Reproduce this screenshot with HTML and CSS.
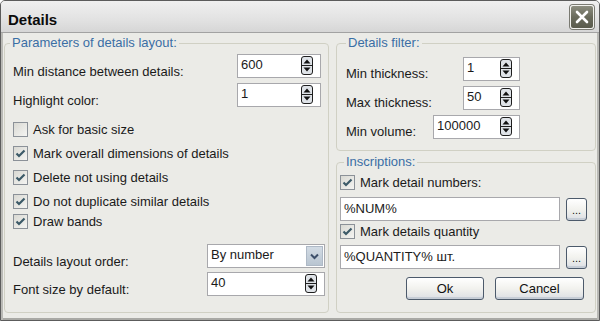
FILE: index.html
```html
<!DOCTYPE html>
<html lang="en">
<head>
  <meta charset="UTF-8">
  <title>Details</title>
  <link rel="stylesheet" href="styles.css">
</head>
<body>
  <div class="window">
    <div class="titlebar">
      <span class="title">Details</span>
      <div class="close">
        <svg width="22" height="22" viewBox="0 0 22 22"><path d="M6 6 L16 16 M16 6 L6 16" stroke="#fff" stroke-width="2.6" stroke-linecap="round"/></svg>
      </div>
    </div>

    <div class="content">
      <fieldset class="group params">
        <legend>Parameters of details layout:</legend>

        <div class="row">
          <label>Min distance between details:</label>
          <div class="spin-field top">
            <span>600</span>
            <svg class="spin" width="12" height="19" viewBox="0 0 12 19"><rect x="0.5" y="0.5" width="11" height="18" rx="2.5" fill="#dfe3e8" stroke="#1e1e1e"/><path d="M1 9.5 H11" stroke="#1e1e1e"/><path d="M2.5 7.5 L6 3.5 L9.5 7.5 Z M2.5 11.5 L9.5 11.5 L6 15.5 Z" fill="#111"/></svg>
          </div>
        </div>
        <div class="row second">
          <label>Highlight color:</label>
          <div class="spin-field top">
            <span>1</span>
            <svg class="spin" width="12" height="19" viewBox="0 0 12 19"><rect x="0.5" y="0.5" width="11" height="18" rx="2.5" fill="#dfe3e8" stroke="#1e1e1e"/><path d="M1 9.5 H11" stroke="#1e1e1e"/><path d="M2.5 7.5 L6 3.5 L9.5 7.5 Z M2.5 11.5 L9.5 11.5 L6 15.5 Z" fill="#111"/></svg>
          </div>
        </div>

        <div class="checks">
          <div class="check"><span class="box"></span>Ask for basic size</div>
          <div class="check"><span class="box"><svg width="13" height="13" viewBox="0 0 13 13"><path d="M2.5 6.5 L5 9 L10.5 3.5" fill="none" stroke="#3c5a68" stroke-width="2.2"/></svg></span>Mark overall dimensions of details</div>
          <div class="check"><span class="box"><svg width="13" height="13" viewBox="0 0 13 13"><path d="M2.5 6.5 L5 9 L10.5 3.5" fill="none" stroke="#3c5a68" stroke-width="2.2"/></svg></span>Delete not using details</div>
          <div class="check"><span class="box"><svg width="13" height="13" viewBox="0 0 13 13"><path d="M2.5 6.5 L5 9 L10.5 3.5" fill="none" stroke="#3c5a68" stroke-width="2.2"/></svg></span>Do not duplicate similar details</div>
          <div class="check tight"><span class="box"><svg width="13" height="13" viewBox="0 0 13 13"><path d="M2.5 6.5 L5 9 L10.5 3.5" fill="none" stroke="#3c5a68" stroke-width="2.2"/></svg></span>Draw bands</div>
        </div>

        <div class="row order">
          <label>Details layout order:</label>
          <div class="select">
            <span>By number</span>
            <div class="drop"><svg width="9" height="7" viewBox="0 0 9 7"><path d="M1 1.5 L4.5 5 L8 1.5" fill="none" stroke="#3d4f6a" stroke-width="2"/></svg></div>
          </div>
        </div>
        <div class="row font">
          <label>Font size by default:</label>
          <div class="spin-field bottom">
            <span>40</span>
            <svg class="spin" width="12" height="19" viewBox="0 0 12 19"><rect x="0.5" y="0.5" width="11" height="18" rx="2.5" fill="#dfe3e8" stroke="#1e1e1e"/><path d="M1 9.5 H11" stroke="#1e1e1e"/><path d="M2.5 7.5 L6 3.5 L9.5 7.5 Z M2.5 11.5 L9.5 11.5 L6 15.5 Z" fill="#111"/></svg>
          </div>
        </div>
      </fieldset>

      <div class="side">
        <fieldset class="group filter">
          <legend>Details filter:</legend>
          <div class="frow">
            <label>Min thickness:</label>
            <div class="spin-field narrow">
              <span>1</span>
              <svg class="spin" width="12" height="19" viewBox="0 0 12 19"><rect x="0.5" y="0.5" width="11" height="18" rx="2.5" fill="#dfe3e8" stroke="#1e1e1e"/><path d="M1 9.5 H11" stroke="#1e1e1e"/><path d="M2.5 7.5 L6 3.5 L9.5 7.5 Z M2.5 11.5 L9.5 11.5 L6 15.5 Z" fill="#111"/></svg>
            </div>
          </div>
          <div class="frow">
            <label>Max thickness:</label>
            <div class="spin-field narrow">
              <span>50</span>
              <svg class="spin" width="12" height="19" viewBox="0 0 12 19"><rect x="0.5" y="0.5" width="11" height="18" rx="2.5" fill="#dfe3e8" stroke="#1e1e1e"/><path d="M1 9.5 H11" stroke="#1e1e1e"/><path d="M2.5 7.5 L6 3.5 L9.5 7.5 Z M2.5 11.5 L9.5 11.5 L6 15.5 Z" fill="#111"/></svg>
            </div>
          </div>
          <div class="frow">
            <label>Min volume:</label>
            <div class="spin-field wide">
              <span>100000</span>
              <svg class="spin" width="12" height="19" viewBox="0 0 12 19"><rect x="0.5" y="0.5" width="11" height="18" rx="2.5" fill="#dfe3e8" stroke="#1e1e1e"/><path d="M1 9.5 H11" stroke="#1e1e1e"/><path d="M2.5 7.5 L6 3.5 L9.5 7.5 Z M2.5 11.5 L9.5 11.5 L6 15.5 Z" fill="#111"/></svg>
            </div>
          </div>
        </fieldset>

        <fieldset class="group inscriptions">
          <legend>Inscriptions:</legend>
          <div class="check"><span class="box"><svg width="13" height="13" viewBox="0 0 13 13"><path d="M2.5 6.5 L5 9 L10.5 3.5" fill="none" stroke="#3c5a68" stroke-width="2.2"/></svg></span>Mark detail numbers:</div>
          <div class="line">
            <div class="text-field">%NUM%</div>
            <div class="btn dots">...</div>
          </div>
          <div class="check second-check"><span class="box"><svg width="13" height="13" viewBox="0 0 13 13"><path d="M2.5 6.5 L5 9 L10.5 3.5" fill="none" stroke="#3c5a68" stroke-width="2.2"/></svg></span>Mark details quantity</div>
          <div class="line">
            <div class="text-field">%QUANTITY% шт.</div>
            <div class="btn dots">...</div>
          </div>
          <div class="actions">
            <div class="btn ok">Ok</div>
            <div class="btn cancel">Cancel</div>
          </div>
        </fieldset>
      </div>
    </div>
  </div>
</body>
</html>
```

FILE: styles.css
```css
* {
  box-sizing: border-box;
}
body {
  margin: 0;
  font-family: "Liberation Sans", Arial, sans-serif;
  font-size: 13px;
  color: #1a1a1a;
  background: #fff;
}
.window {
  width: 600px;
  height: 321px;
  border: 1px solid #5c5c5c;
  border-radius: 5px 5px 0 0;
  background: #ebebe7;
  box-shadow: inset 2px 0 0 #b9b9b5, inset -2px 0 0 #b9b9b5, inset 0 -2px 0 #a9a9a5;
  display: flex;
  flex-direction: column;
  overflow: hidden;
}
.titlebar {
  height: 32px;
  flex: none;
  display: flex;
  justify-content: space-between;
  align-items: flex-start;
  padding: 4px 5px 0 7px;
  background: linear-gradient(#f0f0f0, #e2e2e2 60%, #d6d6d6);
  border-bottom: 1px solid #a2a2a2;
}
.title {
  margin-top: 6px;
  font-size: 15px;
  line-height: 18px;
  font-weight: bold;
  color: #0c0c0c;
}
.close {
  width: 24px;
  height: 24px;
  border-radius: 3px;
  border: 1px solid #f2f2ee;
  background: linear-gradient(#8d8e80, #6a6b5c 50%, #5a5b4c);
  box-shadow: 0 0 0 1px #7a7a72;
  display: flex;
  align-items: center;
  justify-content: center;
}
.content {
  flex: 1;
  display: flex;
  gap: 7px;
  padding: 3px 3px 7px 3px;
}
.group {
  margin: 0;
  min-width: 0;
  border: 1px solid #d0d0c4;
  border-radius: 4px;
}
.group legend {
  padding: 0 2px;
  line-height: 14px;
  color: #3a6ea5;
}
.params {
  width: 325px;
  flex: none;
  padding: 4px 3px 0 8px;
}
.params legend {
  margin-left: -3px;
}
.row {
  display: flex;
  justify-content: space-between;
  align-items: flex-start;
}
.row label {
  padding-top: 10px;
  line-height: 15px;
}
.row.second {
  margin-top: 4px;
}
.spin-field {
  height: 24px;
  border: 1px solid #a8a8ac;
  background: #fff;
  display: flex;
  justify-content: space-between;
  align-items: center;
  padding: 0 7px 1px 3px;
}
.spin-field span {
  margin-top: -3px;
}
.spin-field.top {
  width: 84px;
  margin-right: 4px;
}
.spin-field.bottom {
  width: 118px;
}
.spin-field.narrow {
  width: 57px;
}
.spin-field.wide {
  width: 87px;
}
.checks {
  margin-top: 14px;
}
.check {
  display: flex;
  align-items: center;
  gap: 5px;
  height: 15px;
  line-height: 15px;
}
.check + .check {
  margin-top: 9px;
}
.check.tight {
  margin-top: 5px;
}
.box {
  width: 15px;
  height: 15px;
  flex: none;
  border: 1px solid #8b9198;
  background: linear-gradient(135deg, #d9d9d3, #f4f4f2);
  display: flex;
  align-items: center;
  justify-content: center;
}
.row.order {
  margin-top: 15px;
}
.row.font {
  margin-top: 3px;
}
.select {
  width: 118px;
  height: 24px;
  border: 1px solid #a8a8ac;
  background: #fff;
  display: flex;
  justify-content: space-between;
  align-items: center;
  padding: 1px 1px 1px 3px;
}
.select span {
  margin-top: -3px;
}
.drop {
  width: 17px;
  height: 100%;
  background: linear-gradient(#d2dbe4, #b9c5d1);
  border: 1px solid #aeb9c6;
  display: flex;
  align-items: center;
  justify-content: center;
}
.side {
  flex: 1;
  display: flex;
  flex-direction: column;
  gap: 4px;
}
.filter {
  flex: none;
  padding: 7px 0 11px 9px;
}
.frow {
  width: 174px;
  display: flex;
  justify-content: space-between;
  align-items: flex-start;
}
.frow + .frow {
  margin-top: 5px;
}
.frow label {
  padding-top: 9px;
  line-height: 15px;
}
.inscriptions {
  flex: 1;
  padding: 6px 7px 0 3px;
}
.inscriptions legend {
  margin-left: 4px;
}
.line {
  display: flex;
  align-items: center;
  gap: 6px;
  margin-top: 7px;
}
.second-check {
  margin-top: 3px;
}
.check.second-check + .line {
  margin-top: 6px;
}
.text-field {
  width: 220px;
  height: 24px;
  border: 1px solid #a8a8ac;
  background: #fff;
  padding: 2px 3px 0;
  line-height: 17px;
}
.btn {
  border: 1px solid #4c5a6b;
  border-radius: 3px;
  background: linear-gradient(#ffffff, #f2f2ee 50%, #dcdfe4);
  box-shadow: inset 0 -2px 0 #c6cdd6;
  display: flex;
  align-items: center;
  justify-content: center;
  color: #111;
}
.dots {
  width: 21px;
  height: 23px;
  align-items: flex-end;
  padding-bottom: 4px;
  font-size: 11px;
  line-height: 11px;
}
.actions {
  display: flex;
  justify-content: flex-end;
  gap: 11px;
  margin-top: 8px;
  margin-right: 4px;
}
.ok {
  width: 78px;
  height: 23px;
}
.cancel {
  width: 89px;
  height: 23px;
}
```
